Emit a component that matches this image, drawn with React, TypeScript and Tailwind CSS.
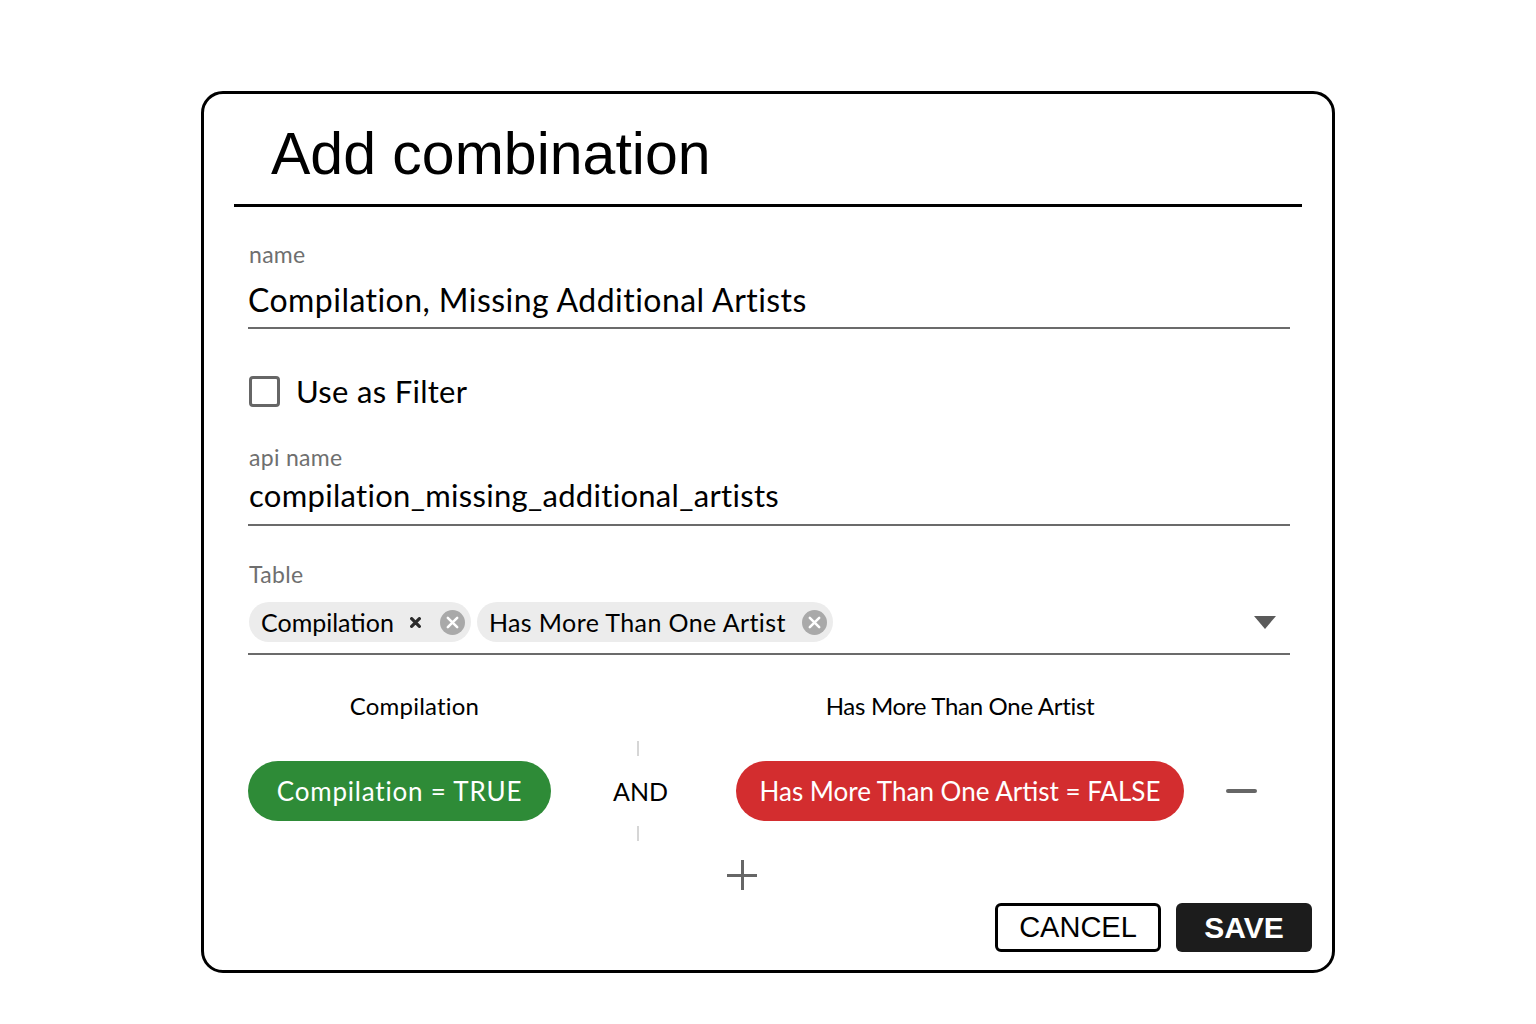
import React from 'react';

const body = { fontFamily: 'Lato, "Noto Sans", sans-serif' };
const arial = { fontFamily: '"Liberation Sans", Arial, sans-serif' };

function ChipClose() {
  return (
    <svg width="25" height="25" viewBox="0 0 24 24" className="shrink-0">
      <circle cx="12" cy="12" r="12" fill="#a9a9a9" />
      <path d="M7.5 7.5 L16.5 16.5 M16.5 7.5 L7.5 16.5" stroke="#ffffff" strokeWidth="2.4" strokeLinecap="round" />
    </svg>
  );
}

function SmallX() {
  return (
    <svg width="11" height="11" viewBox="0 0 10 10" className="shrink-0">
      <path d="M1.5 1.5 L8.5 8.5 M8.5 1.5 L1.5 8.5" stroke="#2b2b2b" strokeWidth="2.9" strokeLinecap="round" />
    </svg>
  );
}

export default function App() {
  return (
    <div className="min-h-screen w-full bg-white pt-[91px] pl-[201px]" style={body}>
      <div className="w-[1134px] h-[882px] border-[3px] border-black rounded-[22px] bg-white">
        {/* title */}
        <div className="px-[30px] pt-[31px]">
          <div className="border-b-[3px] border-black pb-[20px] pr-[3px]">
            <h1 className="pl-[37px] text-[59px] leading-[59px] text-black" style={arial}>
              Add combination
            </h1>
          </div>
        </div>

        {/* form */}
        <div className="pl-[44px] pr-[42px]">
          <div className="mt-[36px] pl-[1px] text-[23px] leading-[23px] tracking-[0.3px] text-[#6f6f6f]">name</div>
          <div className="mt-[18px] border-b-2 border-[#6b6b6b] pb-[11px]">
            <div className="text-[32px] leading-[32px] tracking-[0.45px] text-black">Compilation, Missing Additional Artists</div>
          </div>

          <div className="mt-[47px] flex items-center gap-[16px] pl-[1px]">
            <div className="w-[31px] h-[31px] rounded-[4px] border-[3px] border-[#666666]" />
            <span className="text-[31px] leading-[31px] tracking-[0.3px] text-black">Use as Filter</span>
          </div>

          <div className="mt-[39px] pl-[1px] text-[23px] leading-[23px] tracking-[0.3px] text-[#6f6f6f]">api name</div>
          <div className="mt-[11px] border-b-2 border-[#6b6b6b] pb-[13px] pl-[1px]">
            <div className="text-[31px] leading-[31px] tracking-[0.3px] text-black">compilation_missing_additional_artists</div>
          </div>

          <div className="mt-[37px] pl-[1px] text-[23px] leading-[23px] tracking-[0.3px] text-[#6f6f6f]">Table</div>
          <div className="mt-[16px] border-b-2 border-[#6b6b6b] pb-[11px] flex items-center">
            <div className="flex items-center h-[40px] rounded-full bg-[#ececec] pl-[12px] pr-[6px] ml-[1px]">
              <span className="text-[25px] leading-[25px] text-black">Compilation</span>
              <span className="ml-[16px]"><SmallX /></span>
              <span className="ml-[19px]"><ChipClose /></span>
            </div>
            <div className="flex items-center h-[40px] rounded-full bg-[#ececec] pl-[12px] pr-[6px] ml-[6px]">
              <span className="text-[25px] leading-[25px] tracking-[0.4px] text-black">Has More Than One Artist</span>
              <span className="ml-[16px]"><ChipClose /></span>
            </div>
            <svg width="22" height="13" viewBox="0 0 22 13" className="ml-auto mr-[14px]">
              <path d="M0 0 L22 0 L11 13 Z" fill="#5a5a5a" />
            </svg>
          </div>

          {/* conditions */}
          <div className="mt-[39px] flex text-[24px] leading-[24px] text-black">
            <div className="w-[333px] text-center tracking-[0.2px]">Compilation</div>
            <div className="ml-[155px] w-[448px] text-center tracking-[-0.3px]">Has More Than One Artist</div>
          </div>

          <div className="mt-[23px] flex items-center">
            <div className="w-[303px] h-[60px] rounded-full bg-[#2e8b37] text-white flex items-center justify-center text-[26px] leading-[26px] tracking-[0.8px]">
              Compilation = TRUE
            </div>
            <div className="w-[174px] h-[100px] flex flex-col items-center justify-between">
              <div className="w-[2px] h-[15px] bg-[#d6d6d6]" />
              <span className="pl-[5px] text-[25px] leading-[25px] text-black">AND</span>
              <div className="w-[2px] h-[15px] bg-[#d6d6d6]" />
            </div>
            <div className="ml-[11px] w-[448px] h-[60px] rounded-full bg-[#d32d2f] text-white flex items-center justify-center text-[26px] leading-[26px]">
              Has More Than One Artist = FALSE
            </div>
            <div className="ml-[42px] w-[31px] h-[4px] rounded-full bg-[#666666]" />
          </div>

          <div className="mt-[19px] ml-[479px] w-[30px] h-[30px] relative">
            <div className="absolute left-0 top-[13.5px] w-[30px] h-[3px] bg-[#666666]" />
            <div className="absolute top-0 left-[13.5px] w-[3px] h-[30px] bg-[#666666]" />
          </div>
        </div>

        {/* actions */}
        <div className="mt-[13px] pr-[20px] flex justify-end gap-[15px]" style={arial}>
          <button className="w-[166px] h-[49px] border-[3px] border-black rounded-[6px] bg-white text-[29px] leading-[29px] text-black">
            CANCEL
          </button>
          <button className="w-[136px] h-[49px] rounded-[6px] bg-[#1c1c1c] text-[30px] leading-[30px] font-bold text-white">
            SAVE
          </button>
        </div>
      </div>
    </div>
  );
}
